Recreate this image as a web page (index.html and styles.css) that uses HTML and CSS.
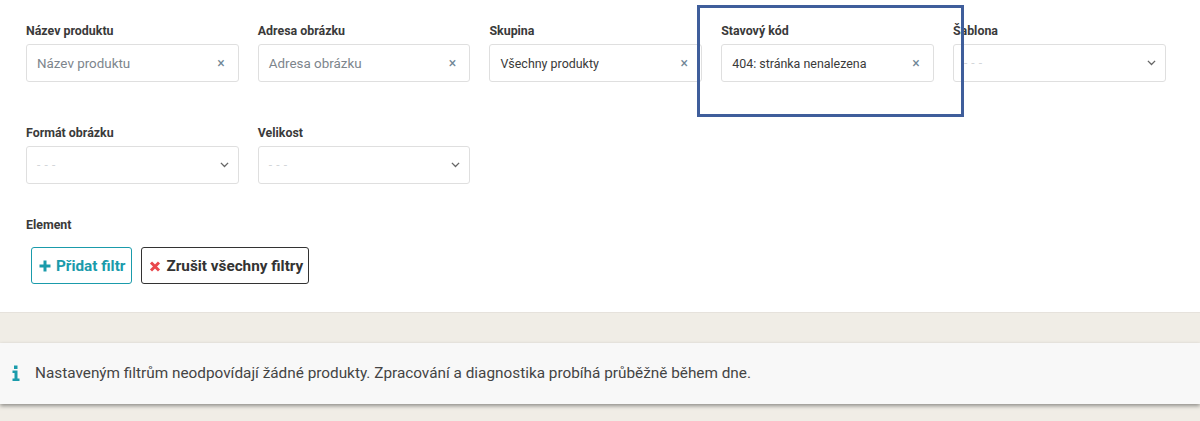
FILE: index.html
```html
<!DOCTYPE html>
<html lang="cs">
<head>
<meta charset="utf-8">
<title>Filtry</title>
<link rel="stylesheet" href="styles.css">
</head>
<body>
<section class="filters">
  <div class="grid">
    <div class="field"><label class="label">Název produktu</label>
      <div class="control"><span class="placeholder">Název produktu</span><span class="clear">×</span></div></div>
    <div class="field"><label class="label">Adresa obrázku</label>
      <div class="control"><span class="placeholder">Adresa obrázku</span><span class="clear">×</span></div></div>
    <div class="field"><label class="label">Skupina</label>
      <div class="control"><span class="value">Všechny produkty</span><span class="clear">×</span></div></div>
    <div class="field"><label class="label">Stavový kód</label>
      <div class="control"><span class="value">404: stránka nenalezena</span><span class="clear">×</span></div></div>
    <div class="field"><label class="label">Šablona</label>
      <div class="control"><span class="empty">- - -</span><svg class="chev" viewBox="0 0 10 6" width="10" height="6"><path d="M1 1l4 4 4-4" fill="none" stroke="#666" stroke-width="1.5"/></svg></div></div>
    <div class="field"><label class="label">Formát obrázku</label>
      <div class="control"><span class="empty">- - -</span><svg class="chev" viewBox="0 0 10 6" width="10" height="6"><path d="M1 1l4 4 4-4" fill="none" stroke="#666" stroke-width="1.5"/></svg></div></div>
    <div class="field"><label class="label">Velikost</label>
      <div class="control"><span class="empty">- - -</span><svg class="chev" viewBox="0 0 10 6" width="10" height="6"><path d="M1 1l4 4 4-4" fill="none" stroke="#666" stroke-width="1.5"/></svg></div></div>
  </div>
  <div class="label element">Element</div>
  <div class="actions">
    <button class="btn btn-add"><svg viewBox="0 0 12 12" width="12" height="12"><path d="M6 0.500v11M0.500 6h11" stroke="#1a9bab" stroke-width="3"/></svg>Přidat filtr</button>
    <button class="btn btn-clear"><svg viewBox="0 0 12 12" width="12" height="12"><path d="M2 2.500l8 8M10 2.500l-8 8" stroke="#e9484d" stroke-width="3"/></svg>Zrušit všechny filtry</button>
  </div>
</section>
<section class="lower">
  <div class="alert">
    <svg class="info" viewBox="0 0 8 16" width="8" height="16"><path fill="#1a9bab" d="M2 0.500h3.500v3.500h-3.500zM0.500 5.500h5v8h2v2.500h-7v-2.500h2v-5.500h-2z"/></svg>
    <span>Nastaveným filtrům neodpovídají žádné produkty. Zpracování a diagnostika probíhá průběžně během dne.</span>
  </div>
</section>
<div class="highlight"></div>
</body>
</html>
```
FILE: styles.css
```css
* { box-sizing: border-box; }
html, body { margin: 0; padding: 0; height: 421px; overflow: hidden; }
body { background: #fff; font-family: Roboto, "Liberation Sans", sans-serif; color: #333; position: relative; }
.filters { height: 313px; padding: 24px 34.5px 0 26px; border-bottom: 1px solid #e6e2dc; }
.grid { display: grid; grid-template-columns: repeat(5, 1fr); column-gap: 19.1px; row-gap: 44px; }
.field { display: flex; flex-direction: column; }
.label { display: block; font-size: 12.4px; font-weight: 700; line-height: 14px; color: #3a3a3a; margin-bottom: 6px; }
.control { height: 38px; border: 1px solid #dfdfdf; border-radius: 3px; display: flex; align-items: center; justify-content: space-between; padding: 0 14px 0 10px; background: #fff; }
.placeholder { font-size: 13.4px; color: #7d858c; }
.value { font-size: 12.45px; color: #3a3a3a; }
.empty { font-size: 12px; color: #d3d6d9; letter-spacing: 0.6px; }
.clear { font-size: 14px; color: #6f8696; line-height: 1; margin-right: -1px; }
.chev { width: 9px; height: 5.4px; margin-right: -5px; }
.element { margin-top: 34px; margin-bottom: 0; }
.actions { display: flex; gap: 9px; margin: 15px 0 0 5px; }
.btn { height: 37px; padding: 0 5px 0 7px; border-radius: 3px; background: #fff; font-family: inherit; font-size: 15.3px; font-weight: 700; display: flex; align-items: center; gap: 5px; }
.btn-add { color: #1a9bab; border: 1px solid #1a9bab; padding-right: 6px; }
.btn-clear { color: #333; border: 1px solid #333; }
.lower { height: 108px; background: #f0ede6; padding-top: 30px; }
.alert { height: 61px; background: #f8f8f8; box-shadow: 0 2px 4px rgba(0,0,0,0.4); display: flex; align-items: center; gap: 15px; padding: 0 0 2px 12px; font-size: 15.33px; color: #444; }
.highlight { position: absolute; left: 697px; top: 5px; width: 267px; height: 112px; border: 3px solid #3f5e9b; pointer-events: none; }
```
